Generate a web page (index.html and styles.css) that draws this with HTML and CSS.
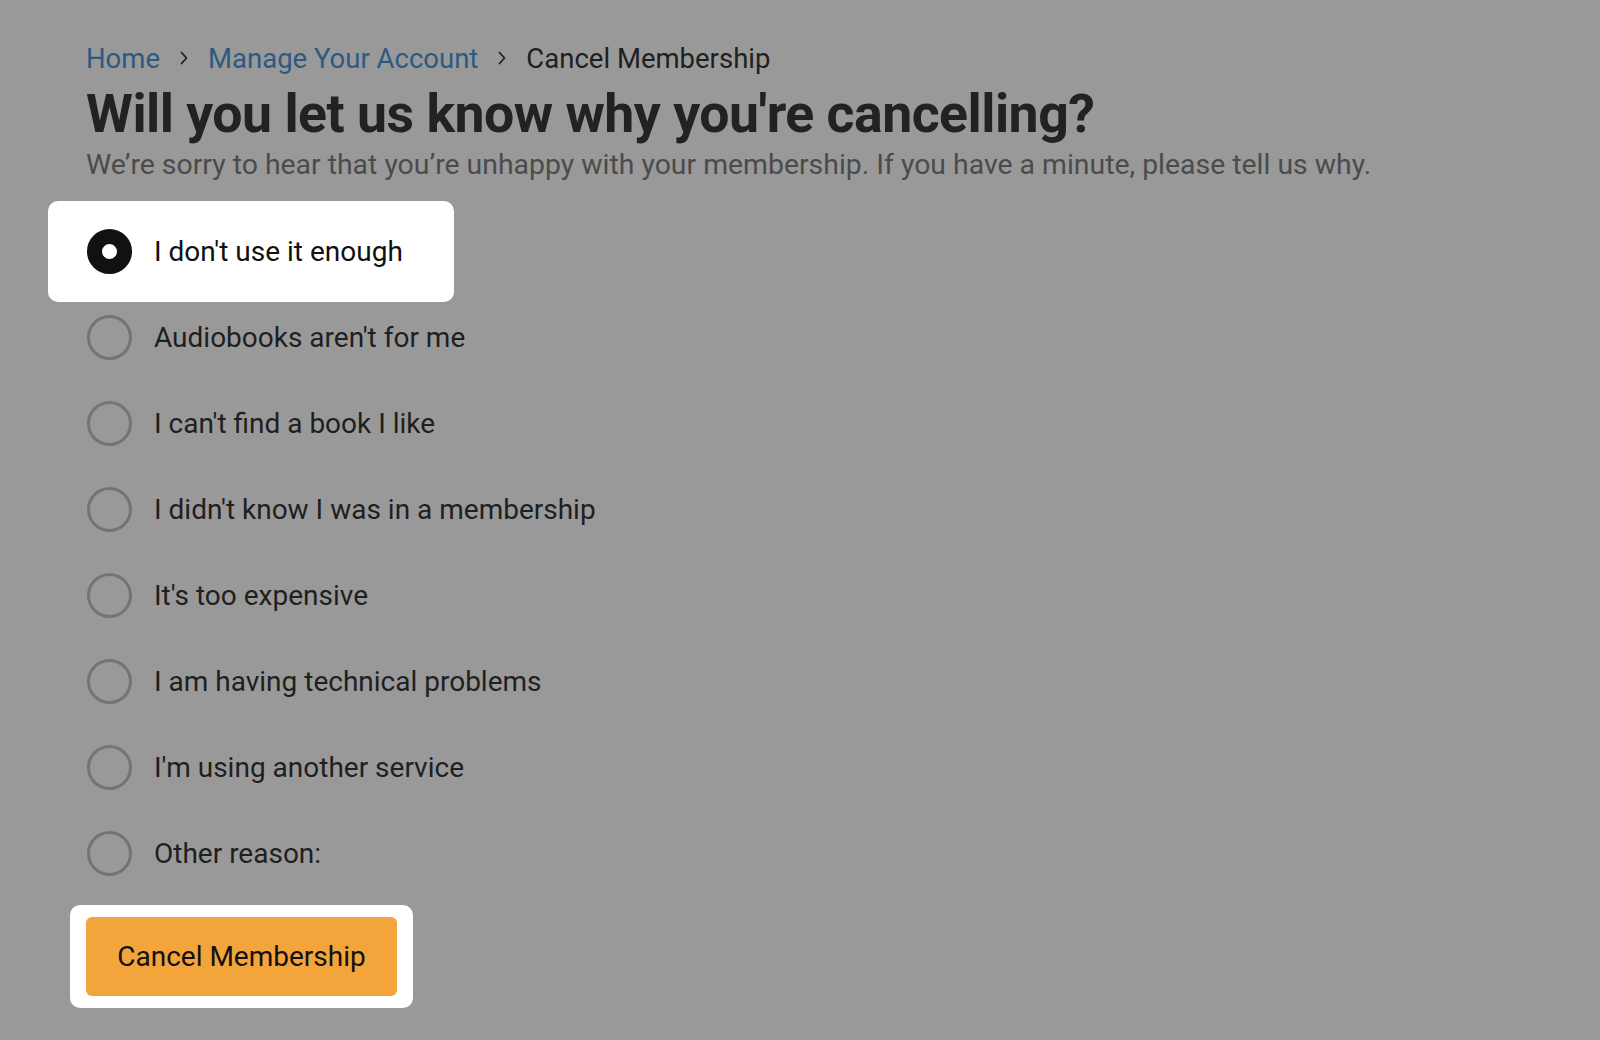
FILE: index.html
```html
<!DOCTYPE html>
<html lang="en">
<head>
<meta charset="utf-8">
<title>Cancel Membership</title>
<link rel="stylesheet" href="styles.css">
</head>
<body>
<main class="page">
  <nav class="crumbs">
    <a class="crumb-link" href="#">Home</a>
    <svg class="chev" viewBox="0 0 8 14" width="8" height="14"><path d="M1.5 1.5 L6.5 7 L1.5 12.5" fill="none" stroke="#222" stroke-width="1.8" stroke-linecap="round" stroke-linejoin="round"/></svg>
    <a class="crumb-link" href="#">Manage Your Account</a>
    <svg class="chev" viewBox="0 0 8 14" width="8" height="14"><path d="M1.5 1.5 L6.5 7 L1.5 12.5" fill="none" stroke="#222" stroke-width="1.8" stroke-linecap="round" stroke-linejoin="round"/></svg>
    <span class="crumb-current">Cancel Membership</span>
  </nav>
  <h1 class="title">Will you let us know why you're cancelling?</h1>
  <p class="sub">We’re sorry to hear that you’re unhappy with your membership. If you have a minute, please tell us why.</p>
  <div class="reasons">
    <div class="reason selected"><span class="radio on"></span><span class="label">I don't use it enough</span></div>
    <div class="reason"><span class="radio"></span><span class="label">Audiobooks aren't for me</span></div>
    <div class="reason"><span class="radio"></span><span class="label">I can't find a book I like</span></div>
    <div class="reason"><span class="radio"></span><span class="label">I didn't know I was in a membership</span></div>
    <div class="reason"><span class="radio"></span><span class="label">It's too expensive</span></div>
    <div class="reason"><span class="radio"></span><span class="label">I am having technical problems</span></div>
    <div class="reason"><span class="radio"></span><span class="label">I'm using another service</span></div>
    <div class="reason"><span class="radio"></span><span class="label">Other reason:</span></div>
  </div>
  <div class="action-wrap"><button class="cancel-btn" type="button">Cancel Membership</button></div>
</main>
</body>
</html>
```

FILE: styles.css
```css
html, body {
  margin: 0;
  padding: 0;
  background: #999999;
}
body {
  font-family: Roboto, "Liberation Sans", sans-serif;
  color: #222;
}
.page {
  padding: 40px 0 0 86px;
}
.crumbs {
  display: flex;
  align-items: center;
  gap: 20px;
  height: 36px;
  font-size: 27.5px;
}
.crumb-link {
  color: #2d5a82;
  text-decoration: none;
}
.crumb-current {
  color: #1f1f1f;
}
.chev {
  display: block;
}
.title {
  margin: 6px 0 0 0;
  font-size: 53.6px;
  font-weight: 700;
  line-height: 64px;
  color: #222;
  letter-spacing: -0.5px;
}
.sub {
  margin: 2px 0 0 0;
  font-size: 28.4px;
  line-height: 34px;
  color: #4b4b4b;
}
.reasons {
  margin-top: 26px;
  display: flex;
  flex-direction: column;
}
.reason {
  display: flex;
  align-items: center;
  gap: 22px;
  height: 86px;
  box-sizing: border-box;
  margin-left: -38px;
  padding: 0 39px;
  font-size: 28px;
  color: #1f1f1f;
}
.reason.selected {
  background: #fff;
  border-radius: 10px;
  width: 406px;
  height: 101px;
  margin-top: -7px;
  margin-bottom: -8px;
  color: #111;
}
.radio {
  width: 45px;
  height: 45px;
  box-sizing: border-box;
  border-radius: 50%;
  border: 3px solid #747474;
  flex: none;
}
.radio.on {
  border: 15px solid #111;
  background: #fff;
}
.action-wrap {
  margin-top: 9px;
  margin-left: -16px;
  width: fit-content;
  background: #fff;
  border-radius: 10px;
  padding: 12px 16px;
}
.cancel-btn {
  display: block;
  width: 311px;
  height: 79px;
  border: none;
  border-radius: 6px;
  background: #f3a43b;
  color: #111;
  font-family: Roboto, "Liberation Sans", sans-serif;
  font-size: 28px;
  cursor: pointer;
}
```
